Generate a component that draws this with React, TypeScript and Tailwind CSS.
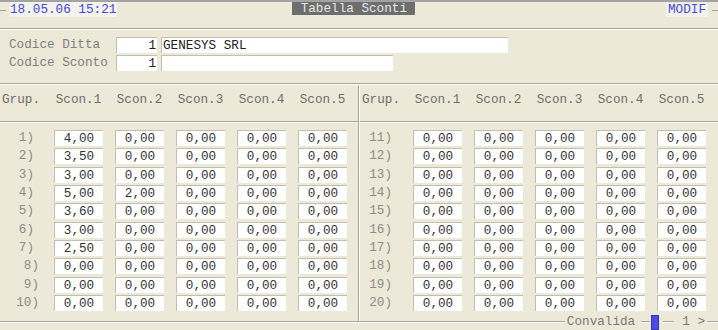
const col1 = ["4,00", "3,50", "3,00", "5,00", "3,60", "3,00", "2,50", "0,00", "0,00", "0,00"];
const col2 = ["0,00", "0,00", "0,00", "2,00", "0,00", "0,00", "0,00", "0,00", "0,00", "0,00"];

function Line({ className = "" }: { className?: string }) {
  return <div className={`h-[2px] border-t border-b border-t-[#A9A698] border-b-white ${className}`} />;
}

function Cell({ value }: { value: string }) {
  return (
    <div className="w-[49px] h-[16px] bg-white border-t border-l border-[#C2BFB1] text-center leading-[15px] text-[#333]">
      {value}
    </div>
  );
}

function Table({ start, right }: { start: number; right?: boolean }) {
  const rows = Array.from({ length: 10 }, (_, i) => start + i);
  return (
    <div className="flex flex-col h-full">
      <div className="h-[36px] pt-[7px] flex text-[#6E6E6E] leading-[15px]">
        <div className={right ? "w-[53px] pl-[2px]" : "w-[54px] pl-[2px]"}>Grup.</div>
        <div className="flex gap-[12px]">
          {[1, 2, 3, 4, 5].map((n) => (
            <div key={n} className="w-[49px] text-center whitespace-nowrap">Scon.{n}</div>
          ))}
        </div>
      </div>
      <Line />
      <div className="pt-[7px] flex flex-col">
        {rows.map((r, i) => {
          const pad = right ? "pr-[21px]" : i < 7 ? "pr-[20px]" : "pr-[15px]";
          return (
            <div key={r} className="h-[18.33px] flex items-start">
              <div className={`${right ? "w-[53px]" : "w-[54px]"} ${pad} text-right leading-[16px] text-[#8C8C8C]`}>
                {r})
              </div>
              <div className="flex gap-[12px]">
                <Cell value={right ? "0,00" : col1[i]} />
                <Cell value={right ? "0,00" : col2[i]} />
                <Cell value="0,00" />
                <Cell value="0,00" />
                <Cell value="0,00" />
              </div>
            </div>
          );
        })}
      </div>
    </div>
  );
}

export default function App() {
  return (
    <div className="w-[718px] h-[330px] overflow-hidden bg-[#ECE9D8] border-t-2 border-[#A3A3A3] flex flex-col font-['Liberation_Mono','Courier_New',monospace] text-[12.67px]">
      {/* title bar */}
      <div className="h-[26px] flex items-start">
        <div className="w-[6px] h-px mt-[8px] bg-[#A0A0A0]" />
        <div className="ml-[3px] h-[15px] px-[1px] leading-[15px] bg-[#F3F2EC] text-[#4646E6] whitespace-nowrap">
          18.05.06 15:21
        </div>
        <div className="ml-[175px] w-[123px] h-[13px] leading-[13px] text-center bg-[#6E6E6E] text-[#E6E6E6] whitespace-nowrap">
          Tabella Sconti
        </div>
        <div className="ml-auto w-[42px] h-[14px] mt-px leading-[14px] text-center bg-[#F3F2EC] text-[#4646E6]">
          MODIF
        </div>
        <div className="ml-[4px] w-[6px] h-px mt-[8px] bg-[#A0A0A0]" />
      </div>
      <Line />

      {/* codes */}
      <div className="h-[53px] pt-[7px] flex flex-col gap-[2px]">
        <div className="h-[16px] flex items-center">
          <div className="w-[116px] pl-[9px] text-[#808080] leading-[16px]">Codice Ditta</div>
          <div className="w-[41px] h-[16px] bg-white border-t border-l border-[#C2BFB1] text-right pr-[1px] leading-[15px] text-[#222]">1</div>
          <div className="ml-[4px] w-[347px] h-[16px] bg-white border-t border-l border-[#C2BFB1] pl-[1px] leading-[15px] text-[#222]">GENESYS SRL</div>
        </div>
        <div className="h-[16px] flex items-center">
          <div className="w-[116px] pl-[9px] text-[#808080] leading-[16px]">Codice Sconto</div>
          <div className="w-[41px] h-[16px] bg-white border-t border-l border-[#C2BFB1] text-right pr-[1px] leading-[15px] text-[#222]">1</div>
          <div className="ml-[4px] w-[232px] h-[16px] bg-white border-t border-l border-[#C2BFB1]" />
        </div>
      </div>
      <Line />

      {/* tables */}
      <div className="h-[237px] flex">
        <div className="w-[358px]">
          <Table start={1} />
        </div>
        <div className="w-[2px] border-l border-r border-l-[#A9A698] border-r-white" />
        <div className="flex-1">
          <Table start={11} right />
        </div>
      </div>

      {/* footer */}
      <div className="-mt-[8px] h-[16px] flex items-center text-[#7A7A7A] leading-[16px]">
        <Line className="flex-1" />
        <div className="ml-[2px] whitespace-nowrap">Convalida</div>
        <Line className="ml-[6px] w-[9px]" />
        <div className="ml-px w-[8px] h-[15px] bg-[#4B4BE8] border border-[#3434B0]" />
        <Line className="ml-[4px] w-[11px]" />
        <div className="ml-[8px] whitespace-nowrap">1 &gt;</div>
        <Line className="ml-[2px] w-[11px] flex-none" />
      </div>
    </div>
  );
}
